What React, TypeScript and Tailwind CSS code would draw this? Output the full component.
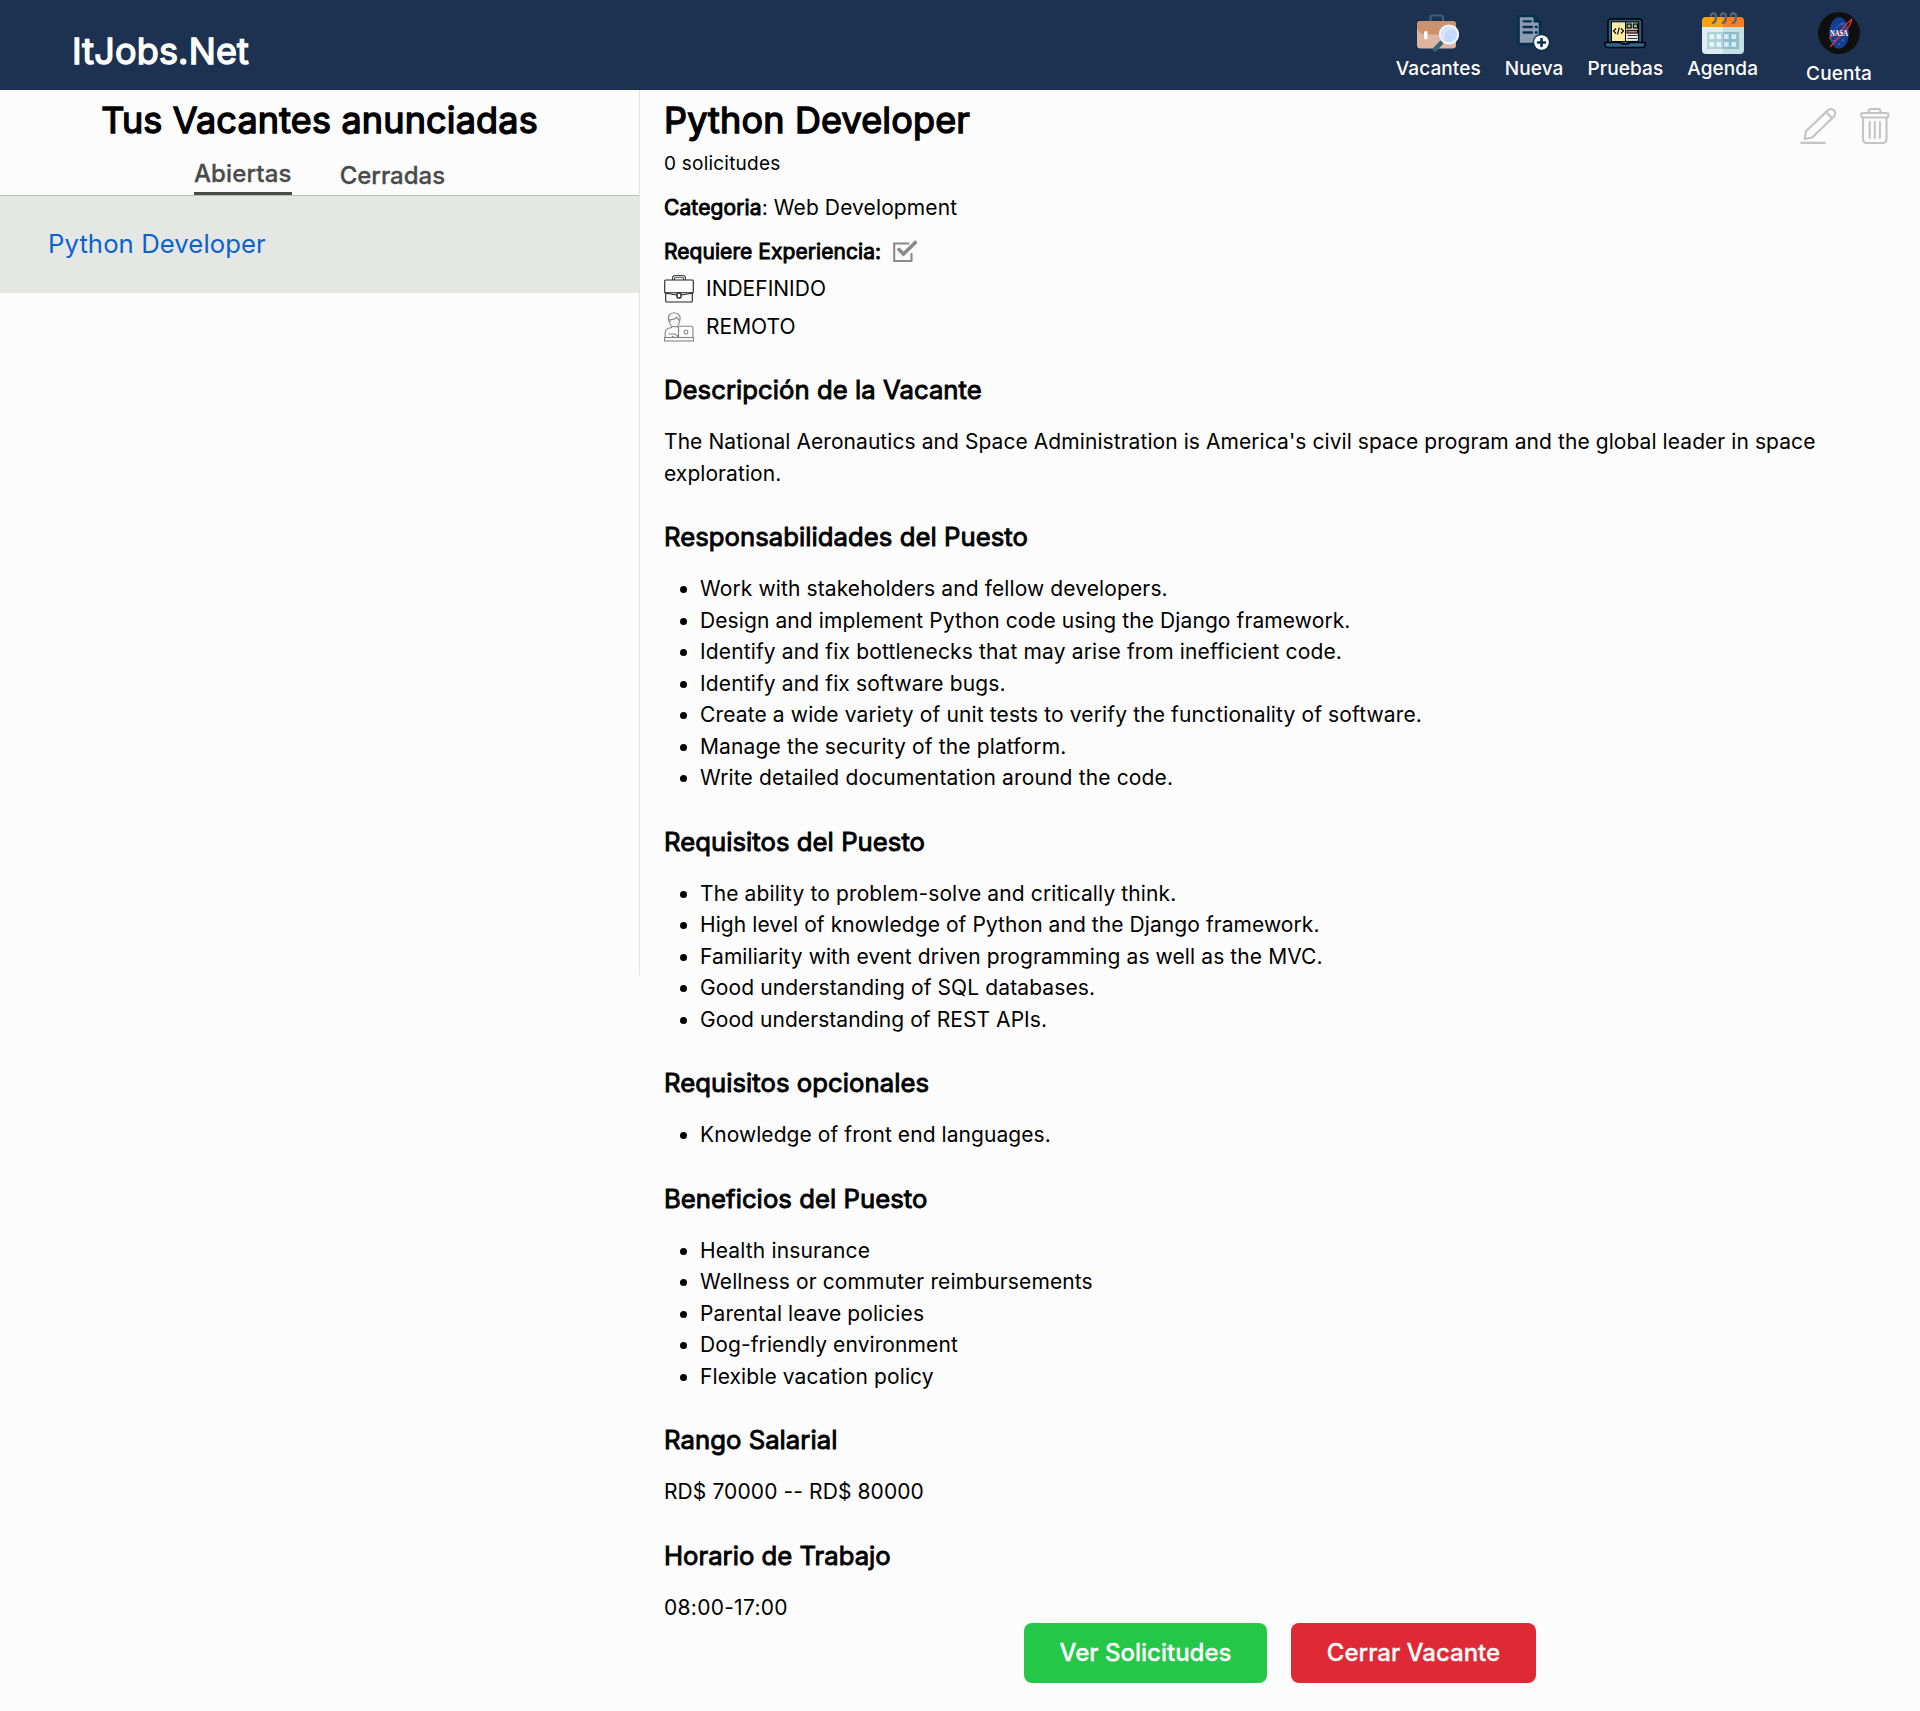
import React from "react";

function VacanciesIcon() {
  return (
    <svg width="42" height="42" viewBox="0 0 42 42">
      <path d="M13.500 10V5.500a2 2 0 0 1 2-2h8.500a2 2 0 0 1 2 2V10" fill="none" stroke="#35637f" strokeWidth="2.200" />
      <rect x="0" y="9" width="39" height="27.500" rx="3.500" fill="#deb59f" />
      <path d="M3.500 9h32a3.500 3.500 0 0 1 3.500 3.500v7c0 2-1.500 3-3.500 3H9C4 22.500 0 19 0 14v-1.500A3.500 3.500 0 0 1 3.500 9Z" fill="#cc916e" />
      <rect x="7" y="19" width="3.600" height="8.500" rx="1.800" fill="#fff" />
      <path d="M24 31 18 37.300" stroke="#35637f" strokeWidth="4.500" strokeLinecap="round" />
      <circle cx="32" cy="22.500" r="9" fill="#c5d9fb" stroke="#eef6ff" strokeWidth="2.200" />
      <path d="M27 26.500a7.200 7.200 0 0 1 9.500-9.500" fill="none" stroke="#dbe8fd" strokeWidth="2.500" />
    </svg>
  );
}

function NewIcon() {
  return (
    <svg width="42" height="42" viewBox="0 0 42 42">
      <path d="M7 4h13.500l6.500 6.500V32H7a1.500 1.500 0 0 1-1.500-1.500v-25A1.500 1.500 0 0 1 7 4Z" fill="#8d9cb3" stroke="#04304c" strokeWidth="2.600" strokeLinejoin="round" />
      <path d="M20.500 4v6.500H27Z" fill="#04304c" />
      <path d="M10.500 9.300h7.500M10.500 15h8.500M10.500 20.500h8.500" stroke="#04304c" strokeWidth="2.300" strokeLinecap="round" />
      <path d="M22.700 15h1M22.700 20.500h1" stroke="#04304c" strokeWidth="2.300" strokeLinecap="round" />
      <circle cx="28.500" cy="30.500" r="9" fill="#04304c" opacity=".75" />
      <circle cx="28.500" cy="30.500" r="7.300" fill="#fff" />
      <path d="M28.500 27v7M25 30.500h7" stroke="#04304c" strokeWidth="2.600" strokeLinecap="round" />
    </svg>
  );
}

function TestsIcon() {
  return (
    <svg width="42" height="42" viewBox="0 0 42 42">
      <rect x="4" y="7" width="34" height="25" rx="3" fill="#2f5d80" stroke="#000" strokeWidth="1.400" />
      <rect x="7.500" y="10" width="27" height="19.500" fill="#e9edf0" stroke="#000" strokeWidth="1.200" />
      <rect x="8" y="10.500" width="13" height="18.500" fill="#ffeaa5" />
      <path d="M21.500 10v19.500" stroke="#000" strokeWidth="1" />
      <path d="m12 16.500-2.500 2.500 2.500 2.500M17 16.500l2.500 2.500-2.500 2.500M15.300 15.500l-1.800 7" fill="none" stroke="#000" strokeWidth="1.100" />
      <rect x="23" y="12" width="4.200" height="4" fill="#8cbf86" stroke="#000" strokeWidth="1.200" />
      <rect x="29.300" y="12" width="4.200" height="4" fill="#8cbf86" stroke="#000" strokeWidth="1.200" />
      <rect x="23" y="18.300" width="10.500" height="2.800" fill="#d9716f" stroke="#000" strokeWidth="1" />
      <path d="M23.500 23.500h10M23.500 26.500h10" stroke="#333" strokeWidth="1.100" />
      <path d="M1 30.500h15.500l1.500 1.500h6l1.500-1.500H41v2.300a2.700 2.700 0 0 1-2.700 2.700H3.700A2.700 2.700 0 0 1 1 32.800Z" fill="#2f6690" stroke="#000" strokeWidth="1.400" strokeLinejoin="round" />
    </svg>
  );
}

function AgendaIcon() {
  return (
    <svg width="42" height="42" viewBox="0 0 42 42">
      <path d="M0 14h21v28H4a4 4 0 0 1-4-4Z" fill="#dfecf0" />
      <path d="M21 14h21v24a4 4 0 0 1-4 4H21Z" fill="#c3e0e5" />
      <path d="M4 5h17v10H0V9a4 4 0 0 1 4-4Z" fill="#ffa30c" />
      <path d="M21 5h17a4 4 0 0 1 4 4v6H21Z" fill="#ff7d1e" />
      <path d="M5 20h16v17H5Z" fill="#abd3da" />
      <path d="M21 20h16v17H21Z" fill="#8fbcc8" />
      <path d="M7.500 22.200h4.700v4.700H7.500zM14.500 22.200h4.700v4.700h-4.700zM7.500 30h4.700v4.700H7.500zM14.500 30h4.700v4.700h-4.700z" fill="#e9f4f6" />
      <path d="M22 22.200h4.700v4.700H22zM29.500 22.200h4.700v4.700h-4.700zM22 30h4.700v4.700H22zM29.500 30h4.700v4.700h-4.700z" fill="#d5edf1" />
      <path d="M9 3.500c.8-3.200 5-3 5 1.500 0 3-.700 5-3 6M19 3.500c.8-3.200 5-3 5 1.500 0 3-.700 5-3 6M29 3.500c.8-3.200 5-3 5 1.500 0 3-.700 5-3 6" fill="none" stroke="#56666f" strokeWidth="2.400" strokeLinecap="round" />
    </svg>
  );
}

function AccountIcon() {
  return (
    <svg width="42" height="42" viewBox="0 0 42 42">
      <circle cx="21" cy="21" r="21" fill="#0f0f10" />
      <ellipse cx="21" cy="21" rx="9.800" ry="15.700" fill="#123f94" />
      <ellipse cx="20" cy="20" rx="4" ry="11" transform="rotate(38 20 20)" fill="none" stroke="#8ea6d4" strokeWidth=".6" strokeDasharray="1.500 1.200" />
      <g fill="#c9d5ee">
        <circle cx="24" cy="12" r=".6" />
        <circle cx="17" cy="29" r=".6" />
        <circle cx="25" cy="28" r=".6" />
        <circle cx="21" cy="32" r=".5" />
      </g>
      <path d="M34 7c-1.500 6-5 11-9.500 14.500L12 35M34 7C28.500 11 25 15 21.500 20L11 26" fill="none" stroke="#e8322f" strokeWidth="1.200" />
      <text x="21" y="24.200" textAnchor="middle" textLength="18" lengthAdjust="spacingAndGlyphs" fontFamily="Liberation Serif" fontWeight="700" fontSize="8.500" fill="#fff">NASA</text>
    </svg>
  );
}

function CheckIcon() {
  return (
    <svg width="24" height="24" viewBox="0 0 24 24" fill="none" stroke="#8a8a8a">
      <path d="M16.500 3.500H1.200v17.500h17.300v-8" strokeWidth="2.100" />
      <path d="m6 9.500 4.500 4.500L22.300 2.500" strokeWidth="3.600" strokeLinecap="round" />
    </svg>
  );
}

function BriefcaseIcon() {
  return (
    <svg width="30" height="30" viewBox="0 0 30 30" fill="none" stroke="#222" strokeWidth="1.100">
      <path d="M8.500 6V4.200c0-1.500 1-2.700 2.500-2.700h8c1.500 0 2.500 1.200 2.500 2.700V6M10.500 6V4.500c0-.7.500-1.200 1.200-1.200h6.600c.7 0 1.200.5 1.200 1.200V6" stroke="#444" />
      <rect x=".7" y="6" width="28.600" height="12.800" rx="1" />
      <path d="M1.700 19v8c0 .5.500 1 1.300 1h24c.8 0 1.300-.5 1.300-1v-8M.7 19l12.300 2M29.300 19 17 21" />
      <rect x="13" y="19" width="4" height="5" rx="1.500" fill="#fcfcfc" strokeWidth="1.400" />
    </svg>
  );
}

function RemoteIcon() {
  return (
    <svg width="30" height="30" viewBox="0 0 30 30" fill="none" stroke="#858585" strokeWidth="1.100">
      <path d="M5 9.500C3 4 6 .8 10.200.8S17.500 4 15.500 9.500" />
      <path d="M5.700 7.800c3 0 5.500-.8 7-2.500.6 1.200 1.400 2 2.500 2.500v2.700c0 2.700-2.300 4.300-4.700 4.300s-4.800-1.600-4.800-4.300Z" />
      <path d="M8.300 14.300c-.2 1.300-1 1.400-3 1.700C2.500 16.500 1.200 18.500 1.200 21V25.500M12.700 14.200c.2.700.6 1 1.300 1.300" />
      <path d="M14.500 25.500V15.500c0-.8.500-1.200 1.200-1.200h12c.8 0 1.200.4 1.200 1.200v10" />
      <path d="M4.500 22h6l3 1.500v2M8 24l2 1.500" />
      <rect x="20.200" y="18.200" width="3.600" height="3.800" rx="1.400" />
      <rect x=".5" y="25.500" width="29" height="3.500" />
    </svg>
  );
}

function EditIcon() {
  return (
    <svg width="36" height="36" viewBox="0 0 36 36" fill="none" stroke="#c4c4c4" strokeWidth="2.200" strokeLinejoin="round" strokeLinecap="round">
      <path d="M4.700 31 6 23.200 27.800 2.400a4.300 4.300 0 0 1 6.100 6.100L12.200 29.500Z" />
      <path d="m26.500 4.500 5.800 5.800" />
      <path d="M1.200 34.900h23.600" />
    </svg>
  );
}

function TrashIcon() {
  return (
    <svg width="30" height="36" viewBox="0 0 30 36" fill="none" stroke="#c4c4c4" strokeWidth="2.100" strokeLinecap="round" strokeLinejoin="round">
      <path d="M8.500 5V3.500A2.500 2.500 0 0 1 11 1h7a2.500 2.500 0 0 1 2.500 2.500V5" />
      <rect x="1" y="5" width="27.500" height="4.500" rx="2" />
      <path d="M3 9.700V31.500A3.500 3.500 0 0 0 6.500 35h16.500a3.500 3.500 0 0 0 3.500-3.500V9.700" />
      <path d="M9.700 14v16M14.800 14v16M19.900 14v16" />
    </svg>
  );
}

function NavItem({ icon, label }: { icon: React.ReactNode; label: string }) {
  return (
    <a className="flex flex-col items-center">
      {icon}
      <span className="mt-px text-[19px] leading-[28px] font-medium tracking-[0.1px] text-white">{label}</span>
    </a>
  );
}

const bold = "font-normal [-webkit-text-stroke:0.9px_currentColor]";
const heading = "font-normal tracking-[0.16px] [-webkit-text-stroke:1.4px_currentColor]";

function Section({ title, children }: { title: string; children: React.ReactNode }) {
  return (
    <section className="mb-[29px]">
      <h3 className={`${bold} mb-[17px] text-[25.700px] leading-[38px] tracking-[0.04px]`}>{title}</h3>
      {children}
    </section>
  );
}

type Item = [text: string, tracking: string];

function Items({ items }: { items: Item[] }) {
  return (
    <ul className="list-disc pl-9">
      {items.map(([text, tracking]) => (
        <li key={text} className={tracking}>{text}</li>
      ))}
    </ul>
  );
}

const responsibilities: Item[] = [
  ["Work with stakeholders and fellow developers.", "tracking-[0.115px]"],
  ["Design and implement Python code using the Django framework.", "tracking-[0.1px]"],
  ["Identify and fix bottlenecks that may arise from inefficient code.", "tracking-[0.14px]"],
  ["Identify and fix software bugs.", "tracking-[0.13px]"],
  ["Create a wide variety of unit tests to verify the functionality of software.", "tracking-[0.13px]"],
  ["Manage the security of the platform.", "tracking-[0.13px]"],
  ["Write detailed documentation around the code.", "tracking-[0.15px]"],
];

const requirements: Item[] = [
  ["The ability to problem-solve and critically think.", "tracking-[0.12px]"],
  ["High level of knowledge of Python and the Django framework.", "tracking-[0.07px]"],
  ["Familiarity with event driven programming as well as the MVC.", "tracking-[0.1px]"],
  ["Good understanding of SQL databases.", "tracking-[0.11px]"],
  ["Good understanding of REST APIs.", "tracking-[0.07px]"],
];

const optional: Item[] = [["Knowledge of front end languages.", "tracking-[0.07px]"]];

const benefits: Item[] = [
  ["Health insurance", "tracking-[0.14px]"],
  ["Wellness or commuter reimbursements", "tracking-[0.13px]"],
  ["Parental leave policies", "tracking-[0.1px]"],
  ["Dog-friendly environment", "tracking-[0.1px]"],
  ["Flexible vacation policy", "tracking-[0.1px]"],
];

export default function App() {
  return (
    <div className="min-h-[1711px] bg-[#fcfcfc] font-['Inter',sans-serif] text-black">
      <header className="flex h-[90px] items-start justify-between bg-[#1d3250] pr-12 pl-[72px]">
        <a className={`${heading} pt-6 text-[36px] leading-[54px] text-white`}>ItJobs.Net</a>
        <nav className="flex gap-6 pt-3">
          <NavItem icon={<VacanciesIcon />} label="Vacantes" />
          <NavItem icon={<NewIcon />} label="Nueva" />
          <NavItem icon={<TestsIcon />} label="Pruebas" />
          <NavItem icon={<AgendaIcon />} label="Agenda" />
          <a className="ml-6 flex flex-col items-center">
            <AccountIcon />
            <span className="mt-[6px] text-[19px] leading-[28px] font-medium tracking-[0.1px] text-white">Cuenta</span>
          </a>
        </nav>
      </header>

      <div className="flex">
        <aside className="h-[885px] w-[640px] shrink-0 border-r border-[#e2e2e2]">
          <h2 className={`${heading} pt-[3px] text-center text-[36px] leading-[54px]`}>Tus Vacantes anunciadas</h2>
          <div className="flex h-[49px] items-end justify-center gap-12 border-b border-[#bdbdbd] text-[24px] leading-[36px] font-medium text-[#4a4a4a] [-webkit-text-stroke:0.3px_currentColor]">
            <a className="border-b-[3px] border-[#4a4a4a] tracking-[0.15px]">Abiertas</a>
            <a className="pb-[1px]">Cerradas</a>
          </div>
          <a className="flex h-[97px] items-center bg-[#e5e7e4] pl-12 text-[25.700px] tracking-[0.08px] text-[#0a62d0]">Python Developer</a>
        </aside>

        <main className="flex-1 pl-6 text-[21px] leading-[31.500px]">
          <div className="flex justify-between pr-[30px]">
            <h1 className={`${heading} pt-[3px] text-[36px] leading-[54px]`}>Python Developer</h1>
            <div className="flex gap-6 pt-[18px]">
              <EditIcon />
              <TrashIcon />
            </div>
          </div>
          <p className="mt-[1.500px] text-[19px] leading-[29px] tracking-[0.22px]">0 solicitudes</p>
          <p className="mt-[14px] tracking-[0.11px]"><b className={bold}>Categoria</b>: Web Development</p>
          <p className="mt-[13px] flex items-center gap-3">
            <b className={`${bold} tracking-[0.06px]`}>Requiere Experiencia:</b>
            <CheckIcon />
          </p>
          <div className="mt-[2px] flex h-[38px] items-center gap-3"><BriefcaseIcon />INDEFINIDO</div>
          <div className="mb-[25.500px] flex h-[38px] items-center gap-3"><RemoteIcon />REMOTO</div>

          <Section title="Descripción de la Vacante">
            <p className="w-[1200px] tracking-[0.07px]">
              The National Aeronautics and Space Administration is America's civil space program and the global leader in space exploration.
            </p>
          </Section>
          <Section title="Responsabilidades del Puesto"><Items items={responsibilities} /></Section>
          <Section title="Requisitos del Puesto"><Items items={requirements} /></Section>
          <Section title="Requisitos opcionales"><Items items={optional} /></Section>
          <Section title="Beneficios del Puesto"><Items items={benefits} /></Section>
          <Section title="Rango Salarial"><p className="tracking-[0.1px]">RD$ 70000 -- RD$ 80000</p></Section>
          <h3 className={`${bold} mb-[17px] text-[25.700px] leading-[38px]`}>Horario de Trabajo</h3>
          <p className="tracking-[0.28px]">08:00-17:00</p>

          <div className="flex justify-center gap-6 pr-6 text-[24px] font-medium text-white [-webkit-text-stroke:0.3px_currentColor]">
            <button className="h-[60px] w-[243px] rounded-lg bg-[#25c748]">Ver Solicitudes</button>
            <button className="h-[60px] w-[245px] rounded-lg bg-[#df2935]">Cerrar Vacante</button>
          </div>
        </main>
      </div>
    </div>
  );
}
